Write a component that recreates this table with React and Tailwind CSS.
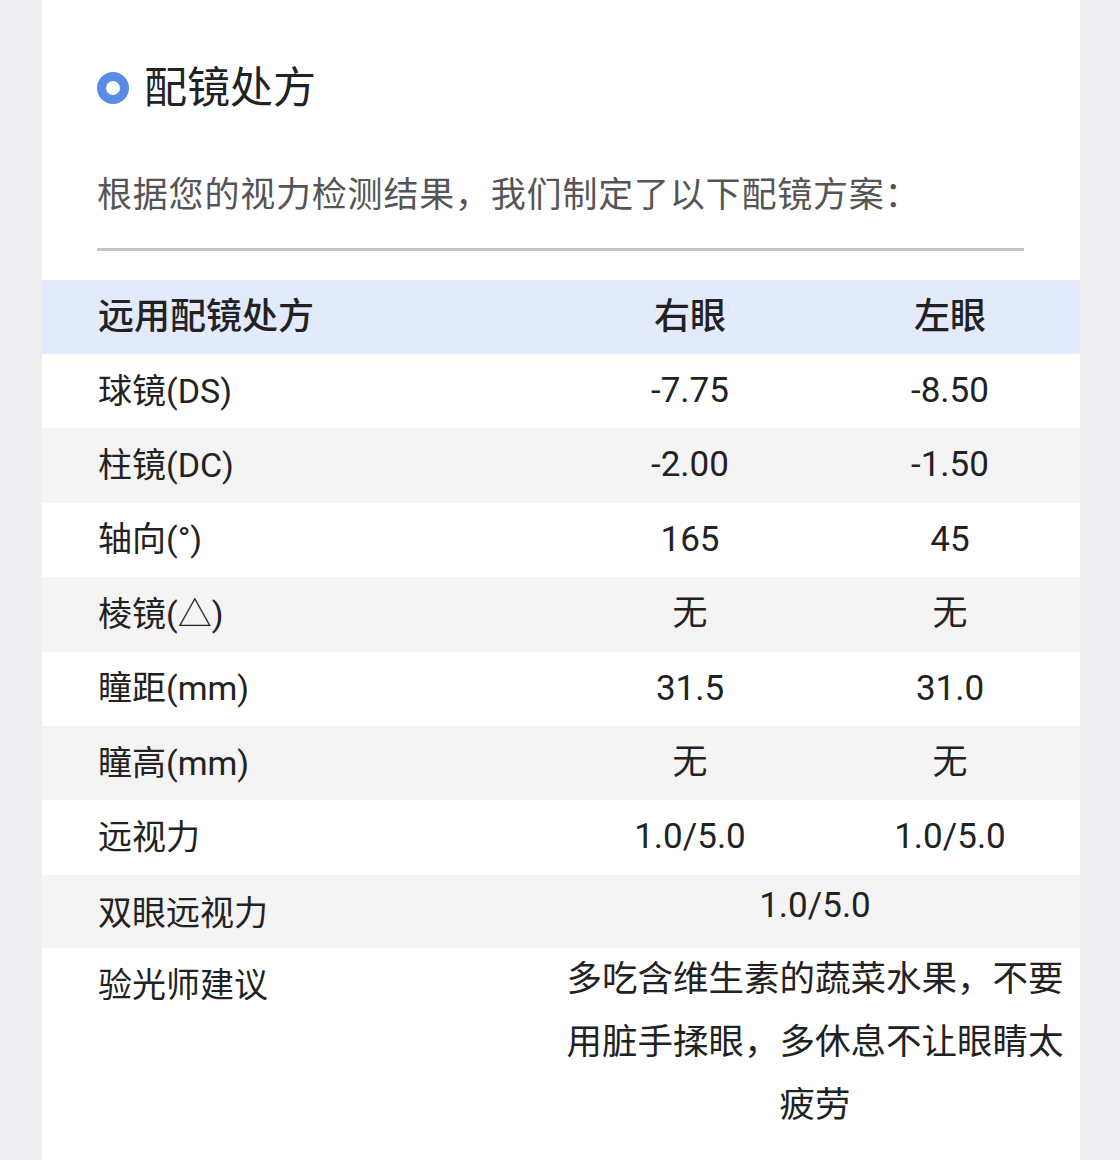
import React from "react";

const rows = [
  ["球镜(DS)", "-7.75", "-8.50"],
  ["柱镜(DC)", "-2.00", "-1.50"],
  ["轴向(°)", "165", "45"],
  ["棱镜(△)", "无", "无"],
  ["瞳距(mm)", "31.5", "31.0"],
  ["瞳高(mm)", "无", "无"],
  ["远视力", "1.0/5.0", "1.0/5.0"],
];

const font = { fontFamily: 'Roboto, "Noto Sans CJK SC", sans-serif' };

export default function App() {
  return (
    <div className="min-h-[1160px] bg-[#efeff1] pl-[42px] pr-[40px]" style={font}>
      <div className="bg-white min-h-[1160px]">
        <div className="px-[55px] pt-[60px]">
          <div className="flex items-center h-[56px]">
            <div className="w-[32px] h-[32px] rounded-full border-[9px] border-[#5b8be9] shrink-0" />
            <div className="ml-[15px] text-[43px] leading-[56px] text-[#222]">配镜处方</div>
          </div>
          <div className="mt-[54px] text-[35px] leading-[52px] text-[#555] tracking-[0.8px] whitespace-nowrap">
            根据您的视力检测结果，我们制定了以下配镜方案：
          </div>
          <div className="mt-[26px] h-[3px] bg-[#c6c6ca] mr-[1px]" />
        </div>
        <div className="mt-[29px]">
          <div className="flex items-center h-[74px] bg-[#e2eafb] text-[36px] text-[#222] font-medium">
            <div className="w-[518px] pl-[56px]">远用配镜处方</div>
            <div className="w-[260px] text-center">右眼</div>
            <div className="w-[260px] text-center">左眼</div>
          </div>
          {rows.map((r, i) => (
            <div
              key={r[0]}
              className={`flex items-center h-[74.4px] text-[34px] text-[#222] ${i % 2 === 1 ? "bg-[#f4f4f4]" : "bg-white"}`}
            >
              <div className="w-[518px] pl-[56px]">{r[0]}</div>
              <div className="w-[260px] text-center text-[35px]">{r[1]}</div>
              <div className="w-[260px] text-center text-[35px]">{r[2]}</div>
            </div>
          ))}
          <div className="flex items-center h-[73px] bg-[#f4f4f4] text-[34px] text-[#222]">
            <div className="w-[518px] pl-[56px] pt-[4px]">双眼远视力</div>
            <div className="w-[510px] text-center -mt-[10px] text-[35px]">1.0/5.0</div>
          </div>
          <div className="flex bg-white text-[#222] pb-[40px]">
            <div className="w-[518px] pl-[56px] pt-[14px] text-[34px] leading-[46px]">验光师建议</div>
            <div className="w-[510px] flex justify-center">
              <div className="w-[505px] text-center text-[35.5px] leading-[63px]">
                多吃含维生素的蔬菜水果，不要用脏手揉眼，多休息不让眼睛太疲劳
              </div>
            </div>
          </div>
        </div>
      </div>
    </div>
  );
}
